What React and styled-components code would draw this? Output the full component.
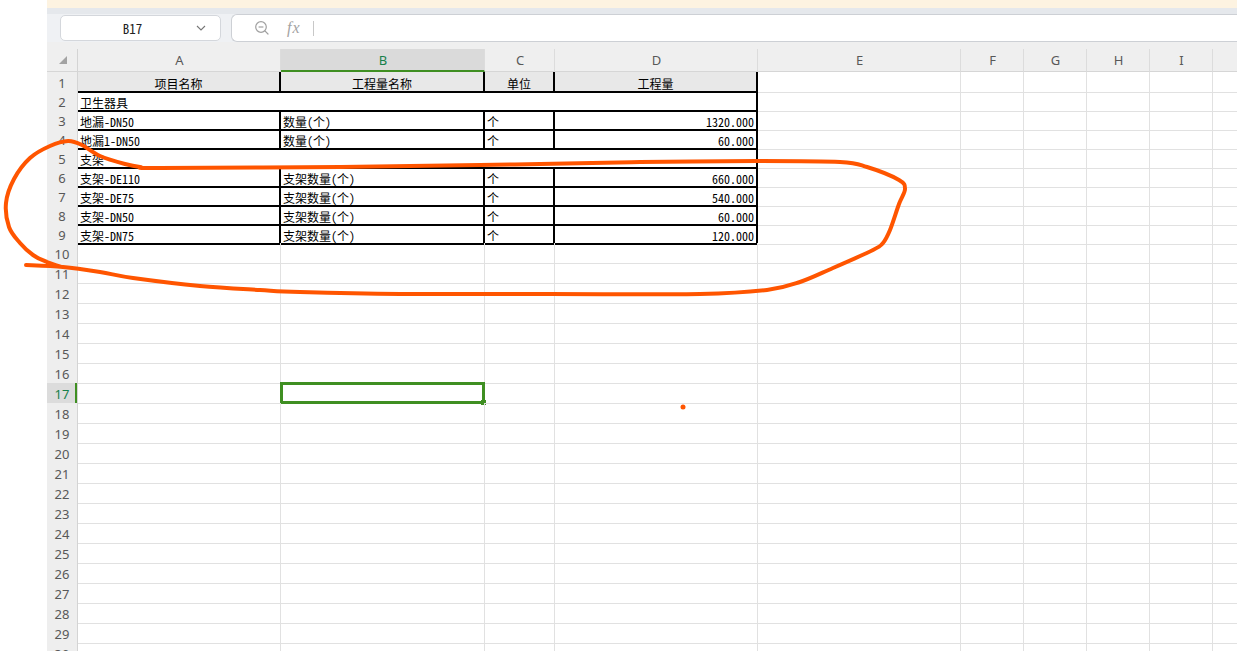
import React from 'react';
import styled, { createGlobalStyle, css } from 'styled-components';

const GREEN = '#3f8f22';
const GREEN_TEXT = '#17804a';
const INK = '#ff5500';
const COLS = ['A', 'B', 'C', 'D', 'E', 'F', 'G', 'H', 'I', 'J'];
const TEMPLATE = '31px 203px 204px 70px 203px 203px 63px 63px 63px 63px 63px';
const CELL_FONT = '"Noto Sans Mono CJK SC", "Noto Sans CJK SC", "Liberation Mono", monospace';
const UI_FONT = '"Noto Sans", "Open Sans", Arial, sans-serif';

const TABLE = {
  1: { head: true, cells: ['项目名称', '工程量名称', '单位', '工程量'] },
  2: { merged: '卫生器具' },
  3: { cells: ['地漏-DN50', '数量(个)', '个', '1320.000'] },
  4: { cells: ['地漏1-DN50', '数量(个)', '个', '60.000'] },
  5: { merged: '支架' },
  6: { cells: ['支架-DE110', '支架数量(个)', '个', '660.000'] },
  7: { cells: ['支架-DE75', '支架数量(个)', '个', '540.000'] },
  8: { cells: ['支架-DN50', '支架数量(个)', '个', '60.000'] },
  9: { cells: ['支架-DN75', '支架数量(个)', '个', '120.000'] },
};

const ROWS = Array.from({ length: 30 }, (_, i) => i + 1);

const INK_POINTS = [
  [26, 265], [63, 267], [100, 272], [133, 278], [200, 286], [260, 290], [300, 292],
  [400, 294], [550, 294], [700, 294], [767, 290], [800, 282], [833, 268], [873, 250],
  [883, 243], [890, 230], [899, 204], [905, 189], [899, 180], [867, 167], [840, 162],
  [757, 161], [640, 162], [540, 164], [480, 165], [340, 167], [160, 168], [140, 167],
  [125, 164], [100, 156], [82, 145], [68, 141], [50, 146], [30, 158], [14, 179],
  [6, 203], [9, 227], [20, 243], [33, 255], [47, 262], [62, 267],
];

function smoothPath(pts) {
  let d = `M${pts[0][0]},${pts[0][1]}`;
  for (let i = 0; i < pts.length - 1; i++) {
    const p0 = pts[i - 1] || pts[i];
    const p1 = pts[i];
    const p2 = pts[i + 1];
    const p3 = pts[i + 2] || p2;
    const c1 = [p1[0] + (p2[0] - p0[0]) / 6, p1[1] + (p2[1] - p0[1]) / 6];
    const c2 = [p2[0] - (p3[0] - p1[0]) / 6, p2[1] - (p3[1] - p1[1]) / 6];
    d += ` C${c1[0].toFixed(1)},${c1[1].toFixed(1)} ${c2[0].toFixed(1)},${c2[1].toFixed(1)} ${p2[0]},${p2[1]}`;
  }
  return d;
}
const INK_PATH = smoothPath(INK_POINTS);

const Global = createGlobalStyle`
  html, body { margin: 0; padding: 0; width: 1237px; height: 651px; overflow: hidden; background: #fff; }
  #root { height: 651px; }
  * { box-sizing: border-box; }
`;

const Page = styled.div`
  position: relative;
  display: flex;
  width: 1237px;
  height: 651px;
  background: #fff;
  overflow: hidden;
`;

const Gutter = styled.div`
  width: 47px;
  flex: none;
  background: #fff;
`;

const Workspace = styled.div`
  flex: 1;
  min-width: 0;
  display: flex;
  flex-direction: column;
  overflow: hidden;
`;

const Banner = styled.div`
  height: 8px;
  flex: none;
  background: #fdf3e1;
`;

const Strip = styled.div`
  height: 6px;
  flex: none;
  background: #e5e8ec;
`;

const FormulaBar = styled.div`
  height: 28px;
  flex: none;
  display: flex;
  align-items: stretch;
  gap: 10px;
  padding-left: 13px;
  background: #eff1f4;
`;

const NameBox = styled.div`
  width: 161px;
  margin: 1px 0;
  display: grid;
  grid-template-columns: 1fr 24px;
  align-items: center;
  background: #fff;
  border: 1px solid #d4d7dc;
  border-radius: 5px;
`;

const NameText = styled.span`
  text-align: center;
  font-family: ${CELL_FONT};
  font-size: 13px;
  color: #222;
  padding-left: 8px;
`;

const FormulaBox = styled.div`
  flex: 1;
  display: flex;
  align-items: center;
  background: #fff;
  border: 1px solid #cdd0d5;
  border-right: none;
  border-radius: 6px 0 0 6px;
  padding-left: 22px;
`;

const Fx = styled.span`
  margin-left: 17px;
  font-family: "Liberation Serif", serif;
  font-style: italic;
  font-size: 16px;
  color: #a3a3a3;
  letter-spacing: 1px;
`;

const Divider = styled.span`
  width: 1px;
  height: 15px;
  margin-left: 12px;
  background: #c8c8c8;
`;

const Sheet = styled.div`
  flex: 1;
  display: flex;
  flex-direction: column;
  overflow: hidden;
`;

const HeaderRow = styled.div`
  display: grid;
  grid-template-columns: ${TEMPLATE};
  height: 30px;
  flex: none;
  align-items: end;
  background: #efefef;
`;

const ColHeader = styled.div`
  height: 23px;
  display: flex;
  align-items: center;
  justify-content: center;
  padding-left: 1px;
  font-family: ${UI_FONT};
  font-size: 13px;
  color: #585858;
  border-right: 1px solid #dcdcdc;
  border-bottom: 1px solid #d6d6d6;
  ${(p) =>
    p.$selected &&
    css`
      background: #dadada;
      color: ${GREEN_TEXT};
      border-bottom: 2px solid ${GREEN};
    `}
`;

const Corner = styled(ColHeader)`
  border-right: 1px solid #d4d4d4;
`;

const Row = styled.div`
  display: grid;
  grid-template-columns: ${TEMPLATE};
  height: ${(p) => p.$h}px;
  flex: none;
`;

const RowNum = styled.div`
  display: flex;
  align-items: center;
  justify-content: center;
  padding-top: 2px;
  font-family: ${UI_FONT};
  font-size: 13px;
  color: #585858;
  background: #eeeeee;
  border-right: 1px solid #d4d4d4;
  border-bottom: 1px solid #dcdcdc;
  ${(p) =>
    p.$selected &&
    css`
      background: #dcdcdc;
      color: ${GREEN_TEXT};
      box-shadow: inset -2px 0 0 ${GREEN};
    `}
`;

const Cell = styled.div`
  position: relative;
  display: flex;
  align-items: flex-end;
  justify-content: ${(p) => (p.$head ? 'center' : p.$right ? 'flex-end' : 'flex-start')};
  grid-column: ${(p) => p.$span || 'auto'};
  padding: 0 2px;
  font-family: ${CELL_FONT};
  font-size: 12px;
  line-height: 15px;
  color: #000;
  white-space: nowrap;
  overflow: visible;
  background: ${(p) => (p.$head ? '#e8e8e8' : 'transparent')};
  border-right: ${(p) => (p.$boxed ? '2px solid #000' : '1px solid #e1e1e1')};
  border-bottom: ${(p) => (p.$boxed ? '2px solid #000' : '1px solid #e1e1e1')};
`;

const Selection = styled.div`
  position: absolute;
  top: -1px;
  left: -1px;
  right: -1px;
  bottom: -1px;
  border: 3px solid ${GREEN};
  pointer-events: none;
`;

const Handle = styled.div`
  position: absolute;
  right: -4px;
  bottom: -4px;
  width: 5px;
  height: 5px;
  background: ${GREEN};
`;

const Ink = styled.svg`
  position: absolute;
  left: 0;
  top: 0;
  pointer-events: none;
`;

function ZoomIcon() {
  return (
    <svg width="16" height="16" viewBox="0 0 16 16" fill="none" stroke="#a0a0a0" strokeWidth="1.2">
      <circle cx="7" cy="7" r="5.3" />
      <line x1="4.6" y1="7" x2="9.4" y2="7" />
      <line x1="10.9" y1="10.9" x2="14" y2="14" strokeLinecap="round" />
    </svg>
  );
}

function Chevron() {
  return (
    <svg width="10" height="6" viewBox="0 0 10 6" fill="none" stroke="#777" strokeWidth="1.1">
      <polyline points="1,1 5,5 9,1" />
    </svg>
  );
}

function CornerMark() {
  return (
    <svg width="8" height="8" viewBox="0 0 8 8">
      <polygon points="8,0 8,8 0,8" fill="#a3a3a3" />
    </svg>
  );
}

function SheetRow({ n }) {
  const t = TABLE[n];
  const selected = n === 17;
  const cells = [];
  if (t && t.merged) {
    cells.push(
      <Cell key="m" $span="2 / 6" $boxed>
        {t.merged}
      </Cell>
    );
    for (let c = 4; c < COLS.length; c++) cells.push(<Cell key={c} />);
  } else {
    COLS.forEach((col, c) => {
      if (t && c < 4) {
        cells.push(
          <Cell key={col} $boxed $head={t.head} $right={c === 3 && !t.head}>
            {t.cells[c]}
          </Cell>
        );
      } else {
        cells.push(
          <Cell key={col}>
            {selected && col === 'B' && (
              <Selection>
                <Handle />
              </Selection>
            )}
          </Cell>
        );
      }
    });
  }
  return (
    <Row $h={n <= 9 ? 19 : 20}>
      <RowNum $selected={selected}>{n}</RowNum>
      {cells}
    </Row>
  );
}

export default function App() {
  return (
    <Page>
      <Global />
      <Gutter />
      <Workspace>
        <Banner />
        <Strip />
        <FormulaBar>
          <NameBox>
            <NameText>B17</NameText>
            <Chevron />
          </NameBox>
          <FormulaBox>
            <ZoomIcon />
            <Fx>fx</Fx>
            <Divider />
          </FormulaBox>
        </FormulaBar>
        <Sheet>
          <HeaderRow>
            <Corner>
              <CornerMark />
            </Corner>
            {COLS.map((c) => (
              <ColHeader key={c} $selected={c === 'B'}>
                {c}
              </ColHeader>
            ))}
          </HeaderRow>
          {ROWS.map((n) => (
            <SheetRow key={n} n={n} />
          ))}
        </Sheet>
      </Workspace>
      <Ink width="1237" height="651" viewBox="0 0 1237 651">
        <path d={INK_PATH} fill="none" stroke={INK} strokeWidth="4" strokeLinecap="round" strokeLinejoin="round" />
        <circle cx="683" cy="407" r="2.5" fill={INK} />
      </Ink>
    </Page>
  );
}
